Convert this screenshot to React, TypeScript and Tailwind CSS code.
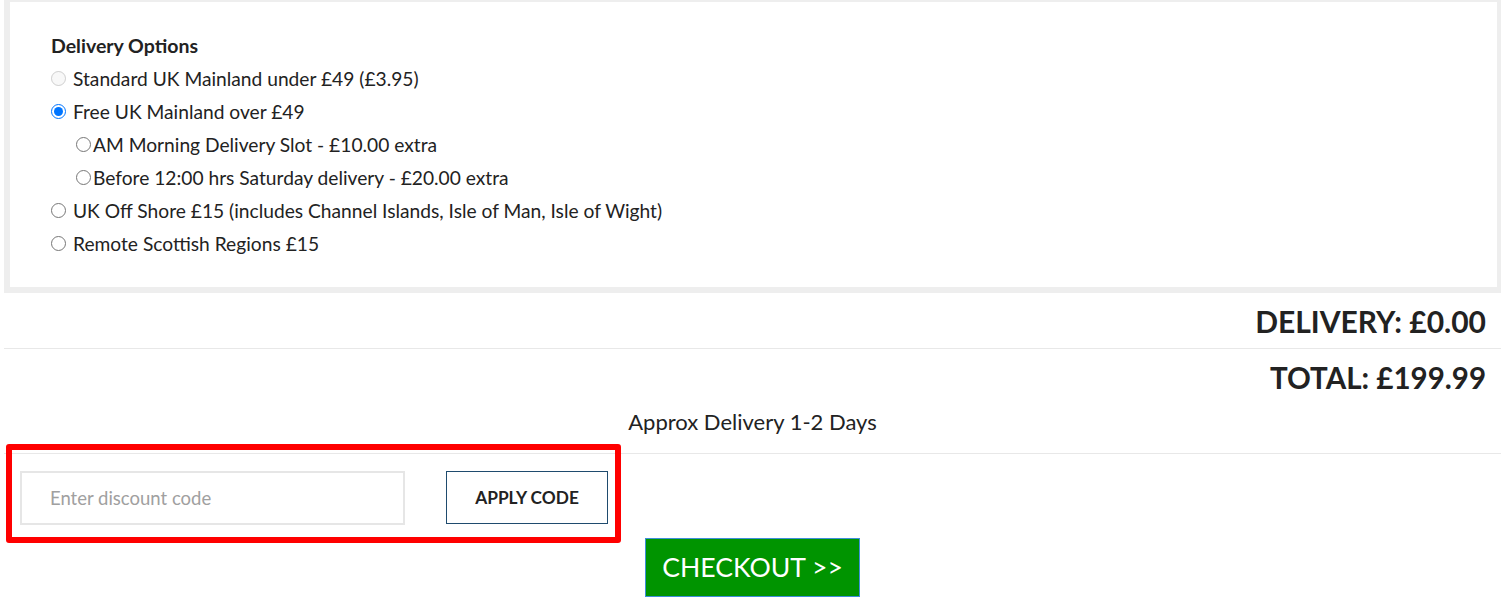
import React from 'react';

const options = [
  { id: 'std', label: 'Standard UK Mainland under £49 (£3.95)', disabled: true },
  { id: 'free', label: 'Free UK Mainland over £49', checked: true },
  { id: 'am', label: 'AM Morning Delivery Slot - £10.00 extra', sub: true },
  { id: 'sat', label: 'Before 12:00 hrs Saturday delivery - £20.00 extra', sub: true },
  { id: 'offshore', label: 'UK Off Shore £15 (includes Channel Islands, Isle of Man, Isle of Wight)' },
  { id: 'remote', label: 'Remote Scottish Regions £15' },
];

export default function App() {
  return (
    <div className="relative pl-[4px] font-['Lato','Noto_Sans',sans-serif] text-[#222222]">
      {/* Delivery options panel */}
      <div className="border-[6px] border-t-2 border-r-4 border-[#eeeeee] bg-white pl-[41px] pt-[27px] pb-[27px]">
        <h3 className="text-[19.5px] font-bold leading-[33px]">Delivery Options</h3>
        {options.map((o) => (
          <label
            key={o.id}
            className={`flex items-center text-[19.2px] leading-[33px] ${o.sub ? 'pl-[25px]' : ''}`}
          >
            <input
              type="radio"
              name={o.sub ? 'extra' : 'delivery'}
              defaultChecked={o.checked}
              disabled={o.disabled}
              className={`m-0 h-[15px] w-[15px] ${o.sub ? 'mr-[2px]' : 'mr-[7px]'}`}
            />
            <span>{o.label}</span>
          </label>
        ))}
      </div>

      {/* Totals */}
      <div className="flex h-[56px] items-center justify-end border-b border-[#e8e8e8] pr-[15px] pt-[1px]">
        <span className="text-[30px] font-bold">DELIVERY: £0.00</span>
      </div>
      <div className="flex h-[58px] items-center justify-end pr-[15px]">
        <span className="text-[29.5px] font-bold">TOTAL: £199.99</span>
      </div>
      <div className="border-b border-[#e8e8e8] pb-[16px] text-center text-[22px] leading-[30px]">
        Approx Delivery 1-2 Days
      </div>

      {/* Discount code */}
      <div className="flex items-start pl-[16px] pt-[17px]">
        <input
          type="text"
          placeholder="Enter discount code"
          className="h-[54px] w-[385px] border-2 border-[#e6e6e6] px-[28px] text-[18.5px] outline-none placeholder:text-[#a0a0a0]"
        />
        <button className="ml-[41px] h-[53px] w-[162px] border border-[#1f4b6e] bg-white text-[17.3px] font-bold text-[#222222]">
          APPLY CODE
        </button>
      </div>

      <div className="flex justify-center pt-[13px]">
        <button className="h-[59px] w-[215px] border border-[#3d8fd8] bg-[#009400] text-[26.6px] text-white">
          CHECKOUT &gt;&gt;
        </button>
      </div>

      {/* annotation box */}
      <div className="pointer-events-none absolute left-[6px] top-[444px] h-[99px] w-[615px] rounded-[3px] border-[6px] border-[#ff0000]" />
    </div>
  );
}
